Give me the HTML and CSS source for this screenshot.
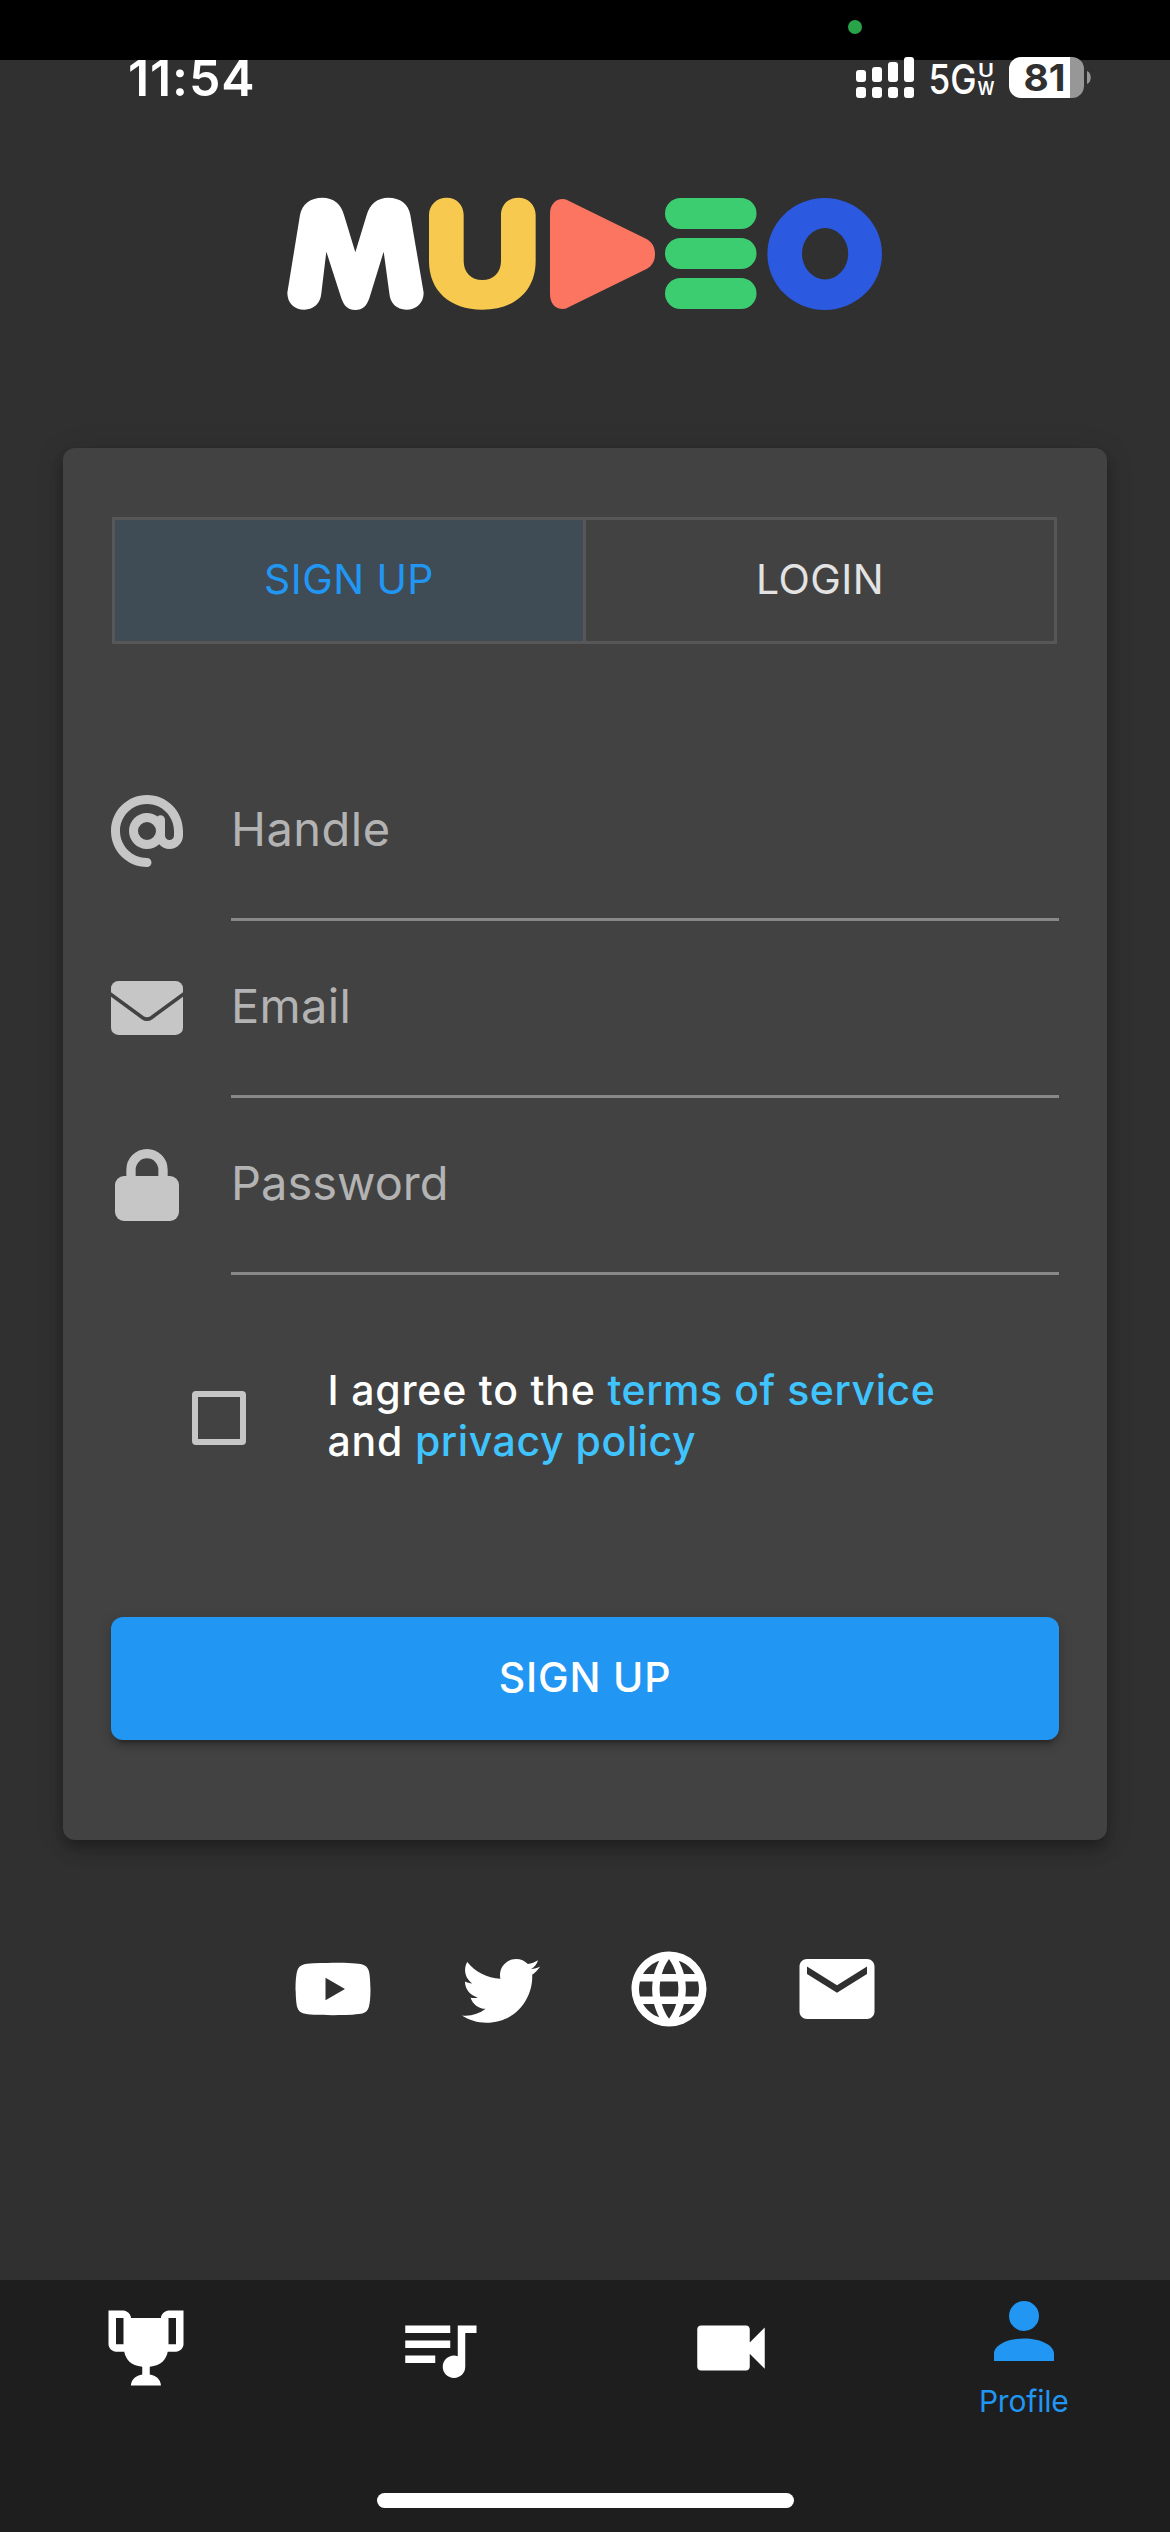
FILE: index.html
```html
<!DOCTYPE html>
<html lang="en">
<head>
<meta charset="utf-8">
<title>mudeo</title>
<link rel="stylesheet" href="styles.css">
</head>
<body>
<div class="screen">
  <div class="notch"><span class="camera-dot"></span></div>
  <header class="status">
    <span class="time">11:54</span>
    <svg class="indicators" width="240" height="46" viewBox="0 0 240 46">
      <g fill="#fff">
        <rect x="0" y="15" width="10" height="12" rx="3"/>
        <rect x="16" y="12" width="10" height="15" rx="3"/>
        <rect x="32" y="7" width="10" height="20" rx="3"/>
        <rect x="48" y="2" width="10" height="25" rx="3"/>
        <rect x="0" y="32" width="10" height="11" rx="3"/>
        <rect x="16" y="32" width="10" height="11" rx="3"/>
        <rect x="32" y="32" width="10" height="11" rx="3"/>
        <rect x="48" y="32" width="10" height="11" rx="3"/>
      </g>
      <text class="net" x="72.500" y="39" textLength="48" lengthAdjust="spacingAndGlyphs">5G</text>
      <text class="net-sub" x="122" y="22" textLength="16" lengthAdjust="spacingAndGlyphs">U</text>
      <text class="net-sub" x="121.500" y="40" textLength="17" lengthAdjust="spacingAndGlyphs">W</text>
      <path fill="#979797" d="M214 2h2a12 12 0 0 1 12 12v17a12 12 0 0 1-12 12h-2z"/>
      <path fill="#fff" d="M214 2h-49a12 12 0 0 0-12 12v17a12 12 0 0 0 12 12h49z"/>
      <path fill="#979797" d="M231 16c5 2 5 11 0 13z"/>
      <text class="battery" x="167.500" y="36" textLength="42" lengthAdjust="spacingAndGlyphs">81</text>
    </svg>
  </header>

  <svg class="logo" width="630" height="150" viewBox="0 0 630 150">
    <g transform="translate(10 10) scale(.33333)">
      <path fill="#fff" d="M60 75C66 42 92 23 127 23C160 23 184 42 192 75L226 187L260 75C269 42 293 23 325 23C360 23 386 42 391 75L431 308C431 338 410 359 379 359C350 359 330 340 328 310L311 185L268 325C259 349 249 360 226 360C203 360 193 349 184 325L139 185L124 310C122 340 101 359 73 359C42 359 22 338 22 308Z"/>
      <path fill="#f7c94e" d="M447 75C447 45 470 23 500 23C530 23 551 45 551 75V213C551 247 573 270 607 270C641 270 663 247 663 213V75C663 45 685 23 715 23C745 23 767 45 767 75V213C767 302 705 359 607 359C509 359 447 302 447 213Z"/>
    </g>
    <path fill="#fc7561" d="M280 34C280 25 285 19 293 19Q296 19 299 21L376.500 59C382 62 385 67 385 74C385 81 382 86 376.500 89L299 127Q296 129 293 129C285 129 280 123 280 114Z"/>
    <g fill="#3dcd71">
      <rect x="395" y="18" width="91.500" height="31" rx="15.500"/>
      <rect x="395" y="58" width="91.500" height="31" rx="15.500"/>
      <rect x="395" y="98" width="91.500" height="31" rx="15.500"/>
    </g>
    <path fill="#2b59df" fill-rule="evenodd" d="M497.400 74a57.300 56 0 1 0 114.600 0a57.300 56 0 1 0-114.600 0M532 73.700a23.100 25.700 0 1 1 46.200 0a23.100 25.700 0 1 1-46.200 0"/>
  </svg>

  <main class="card">
    <div class="toggle">
      <button class="tab tab-active">SIGN UP</button>
      <button class="tab">LOGIN</button>
    </div>
    <div class="fields">
      <label class="field">
        <svg width="72" height="72" viewBox="0 0 512 512"><path d="M256 64C150 64 64 150 64 256s86 192 192 192c17.700 0 32 14.300 32 32s-14.300 32-32 32C114.600 512 0 397.400 0 256S114.600 0 256 0S512 114.600 512 256v32c0 53-43 96-96 96c-29.300 0-55.600-13.200-73.200-33.900C320 371.100 289.500 384 256 384c-70.700 0-128-57.300-128-128s57.300-128 128-128c27.900 0 53.700 8.900 74.700 24.100c5.700-5 13.100-8.100 21.300-8.100c17.700 0 32 14.300 32 32v112c0 17.700 14.300 32 32 32s32-14.300 32-32V256c0-106-86-192-192-192zm64 192a64 64 0 1 0-128 0 64 64 0 1 0 128 0z"/></svg>
        <span class="input handle">Handle</span>
      </label>
      <label class="field">
        <svg width="72" height="72" viewBox="0 0 216 216"><rect y="27" width="216" height="162" rx="22"/><path class="flap" d="M-6 63L95 137Q108 146 121 137L222 63"/></svg>
        <span class="input email">Email</span>
      </label>
      <label class="field">
        <svg width="72" height="72" viewBox="0 0 216 216"><path class="shackle" d="M60 90V62a48 48 0 0 1 96 0V90"/><rect x="12" y="81" width="192" height="135" rx="27"/></svg>
        <span class="input">Password</span>
      </label>
    </div>
    <div class="agree">
      <span class="checkbox"></span>
      <p class="terms">I agree to the <a>terms of service</a><br>and <a>privacy policy</a></p>
    </div>
    <button class="submit">SIGN UP</button>
  </main>

  <div class="social">
    <svg width="90" height="90" viewBox="0 0 24 24"><path d="M10,15L15.190,12L10,9V15M21.560,7.170C21.690,7.640 21.780,8.270 21.840,9.070C21.910,9.870 21.940,10.560 21.940,11.160L22,12C22,14.190 21.840,15.800 21.560,16.830C21.310,17.730 20.730,18.310 19.830,18.560C19.360,18.690 18.500,18.780 17.180,18.840C15.880,18.910 14.690,18.940 13.590,18.940L12,19C7.810,19 5.200,18.840 4.170,18.560C3.270,18.310 2.690,17.730 2.440,16.830C2.310,16.360 2.220,15.730 2.160,14.930C2.090,14.130 2.060,13.440 2.060,12.840L2,12C2,9.810 2.160,8.200 2.440,7.170C2.690,6.270 3.270,5.690 4.170,5.440C4.640,5.310 5.500,5.220 6.820,5.160C8.120,5.090 9.310,5.060 10.410,5.060L12,5C16.190,5 18.800,5.160 19.830,5.440C20.730,5.690 21.310,6.270 21.560,7.170Z"/></svg>
    <svg width="90" height="90" viewBox="0 0 24 24"><path d="M22.460,6C21.690,6.350 20.860,6.580 20,6.690C20.880,6.160 21.560,5.320 21.880,4.310C21.050,4.810 20.130,5.160 19.160,5.360C18.370,4.500 17.260,4 16,4C13.650,4 11.730,5.920 11.730,8.290C11.730,8.630 11.770,8.960 11.840,9.270C8.280,9.090 5.110,7.380 3,4.790C2.630,5.420 2.420,6.160 2.420,6.940C2.420,8.430 3.170,9.750 4.330,10.500C3.620,10.500 2.960,10.300 2.380,10V10.030C2.380,12.110 3.860,13.850 5.820,14.240C5.460,14.340 5.080,14.390 4.690,14.390C4.420,14.390 4.150,14.360 3.890,14.310C4.430,16 6,17.260 7.890,17.290C6.430,18.450 4.580,19.130 2.560,19.130C2.220,19.130 1.880,19.110 1.540,19.070C3.440,20.290 5.700,21 8.120,21C16,21 20.330,14.460 20.330,8.790C20.330,8.600 20.330,8.420 20.320,8.230C21.160,7.630 21.880,6.870 22.460,6Z"/></svg>
    <svg width="90" height="90" viewBox="0 0 24 24"><path d="M16.360,14C16.440,13.340 16.500,12.680 16.500,12C16.500,11.320 16.440,10.660 16.360,10H19.740C19.900,10.640 20,11.310 20,12C20,12.690 19.900,13.360 19.740,14M14.590,19.560C15.190,18.450 15.650,17.250 15.970,16H18.920C17.960,17.650 16.430,18.930 14.590,19.560M14.340,14H9.660C9.560,13.340 9.500,12.680 9.500,12C9.500,11.320 9.560,10.650 9.660,10H14.340C14.430,10.650 14.500,11.320 14.500,12C14.500,12.680 14.430,13.340 14.340,14M12,19.960C11.170,18.760 10.500,17.430 10.090,16H13.910C13.500,17.430 12.830,18.760 12,19.960M8,8H5.080C6.030,6.340 7.570,5.060 9.400,4.440C8.800,5.550 8.350,6.750 8,8M5.080,16H8C8.350,17.250 8.800,18.450 9.400,19.560C7.570,18.930 6.030,17.650 5.080,16M4.260,14C4.100,13.360 4,12.690 4,12C4,11.310 4.100,10.640 4.260,10H7.640C7.560,10.660 7.500,11.320 7.500,12C7.500,12.680 7.560,13.340 7.640,14M12,4.030C12.830,5.230 13.500,6.570 13.910,8H10.090C10.500,6.570 11.170,5.230 12,4.030M18.920,8H15.970C15.650,6.750 15.190,5.550 14.590,4.440C16.430,5.070 17.960,6.340 18.920,8M12,2C6.470,2 2,6.500 2,12A10,10 0 0,0 12,22A10,10 0 0,0 22,12A10,10 0 0,0 12,2Z"/></svg>
    <svg width="90" height="90" viewBox="0 0 24 24"><path d="M20 4H4c-1.100 0-2 .9-2 2v12c0 1.100.9 2 2 2h16c1.100 0 2-.9 2-2V6c0-1.100-.9-2-2-2zm0 4l-8 5-8-5V6l8 5 8-5v2z"/></svg>
  </div>

  <nav class="nav">
    <div class="items">
      <a class="item"><svg width="90" height="90" viewBox="0 0 24 24"><path d="M20.200,2H18C17.100,2 16,3 16,4H8C8,3 6.900,2 6,2H2V11C2,12 3,13 4,13H6.200C6.600,15 7.900,16.700 11,17V19.080C8,19.540 8,22 8,22H16C16,22 16,19.540 13,19.080V17C16.100,16.700 17.400,15 17.800,13H20C21,13 22,12 22,11V2H20.200M4,11V4H6V11H4M20,11H18V4H20V11Z"/></svg></a>
      <a class="item"><svg width="90" height="90" viewBox="0 0 24 24"><path d="M15 6H3v2h12V6zm0 4H3v2h12v-2zM3 16h8v-2H3v2zM17 6v8.180c-.31-.11-.65-.18-1-.18-1.660 0-3 1.340-3 3s1.340 3 3 3 3-1.340 3-3V8h3V6h-5z"/></svg></a>
      <a class="item"><svg width="90" height="90" viewBox="0 0 24 24"><path d="M17 10.500V7c0-.55-.45-1-1-1H4c-.55 0-1 .45-1 1v10c0 .55.45 1 1 1h12c.55 0 1-.45 1-1v-3.500l4 4v-11l-4 4z"/></svg></a>
      <a class="item current"><svg width="90" height="90" viewBox="0 0 24 24"><path d="M12,4A4,4 0 0,1 16,8A4,4 0 0,1 12,12A4,4 0 0,1 8,8A4,4 0 0,1 12,4M12,14C16.420,14 20,15.790 20,18V20H4V18C4,15.790 7.580,14 12,14Z"/></svg><span class="label">Profile</span></a>
    </div>
    <div class="home"></div>
  </nav>
</div>
</body>
</html>
```
FILE: styles.css
```css
* { box-sizing: border-box; margin: 0; padding: 0; }
body { background: #303030; font-family: Inter, "Liberation Sans", sans-serif; color: #fff; }
svg { display: block; flex: none; }
button { font: inherit; letter-spacing: inherit; border: 0; background: none; color: inherit; }

.screen { width: 1170px; height: 2532px; display: flex; flex-direction: column; align-items: center; overflow: hidden; }

.notch { width: 100%; height: 60px; flex: none; background: #000; padding: 20px 0 0 848px; }
.camera-dot { display: block; width: 14px; height: 14px; border-radius: 50%; background: #2aa44a; }

.status { width: 100%; height: 120px; flex: none; display: flex; justify-content: space-between; padding: 0 74px 0 128px; }
.time { font-size: 50px; font-weight: 600; line-height: 36px; letter-spacing: 0.9px; }
.indicators { margin-top: -5px; overflow: visible; }
.net, .net-sub, .battery { font-family: Inter, "Liberation Sans", sans-serif; fill: #fff; }
.net { font-size: 41px; font-weight: 500; }
.net-sub { font-size: 18px; font-weight: 600; }
.battery { font-size: 37px; font-weight: 700; fill: #303030; }

.logo { margin-bottom: 118px; }

.card { width: 1044px; height: 1392px; flex: none; padding: 69px 48px 0; background: #424242; border-radius: 12px; box-shadow: 0 6px 12px -3px rgba(0,0,0,.2), 0 12px 15px rgba(0,0,0,.14), 0 3px 30px rgba(0,0,0,.12); }
.toggle { height: 127px; margin: 0 2px 0 1px; display: flex; border: 3px solid #575757; font-size: 41px; letter-spacing: 0.4px; }
.tab { flex: 1; color: #e3e3e3; padding-bottom: 3px; }
.tab-active { background: #3f4c56; color: #2196f3; border-right: 3px solid #575757; }

.fields { margin-top: 100px; }
.field { display: flex; gap: 48px; height: 177px; }
.field svg { margin-top: 51px; fill: #c6c6c6; overflow: hidden; }
.field .flap { fill: none; stroke: #424242; stroke-width: 11; }
.field .shackle { fill: none; stroke: #c6c6c6; stroke-width: 28; }
.input { flex: 1; padding-top: 49px; line-height: 72px; font-size: 47px; color: #b3b3b3; border-bottom: 3px solid #888; }
.handle { letter-spacing: 0.5px; }
.email { letter-spacing: 0.3px; }

.agree { margin-top: 90px; height: 102px; display: flex; align-items: center; gap: 81.5px; padding-left: 81px; }
.checkbox { width: 54px; height: 54px; margin-top: 3px; border: 6px solid #c6c6c6; border-radius: 4px; }
.terms { font-size: 41px; font-weight: 500; line-height: 51px; letter-spacing: 0.8px; white-space: nowrap; }
.terms a { color: #40c4ff; letter-spacing: 0.57px; }

.submit { display: block; width: 948px; height: 123px; margin-top: 150px; padding-bottom: 3px; background: #2196f3; border-radius: 12px; font-size: 41px; font-weight: 500; letter-spacing: 0.8px; box-shadow: 0 9px 3px -6px rgba(0,0,0,.2), 0 6px 6px rgba(0,0,0,.14), 0 3px 15px rgba(0,0,0,.12); }

.social { display: flex; gap: 78px; margin-top: 104px; fill: #fff; }

.nav { width: 100%; height: 252px; flex: none; margin-top: auto; background: #1e1e1e; display: flex; flex-direction: column; align-items: center; justify-content: space-between; padding-bottom: 24px; }
.items { width: 100%; display: flex; }
.item { flex: 1; display: flex; flex-direction: column; align-items: center; padding-top: 23px; fill: #fff; }
.current { padding-top: 6px; fill: #2196f3; color: #2196f3; }
.label { font-size: 30px; line-height: 50px; letter-spacing: -0.2px; }
.home { width: 417px; height: 15px; border-radius: 8px; background: #fff; }
```
